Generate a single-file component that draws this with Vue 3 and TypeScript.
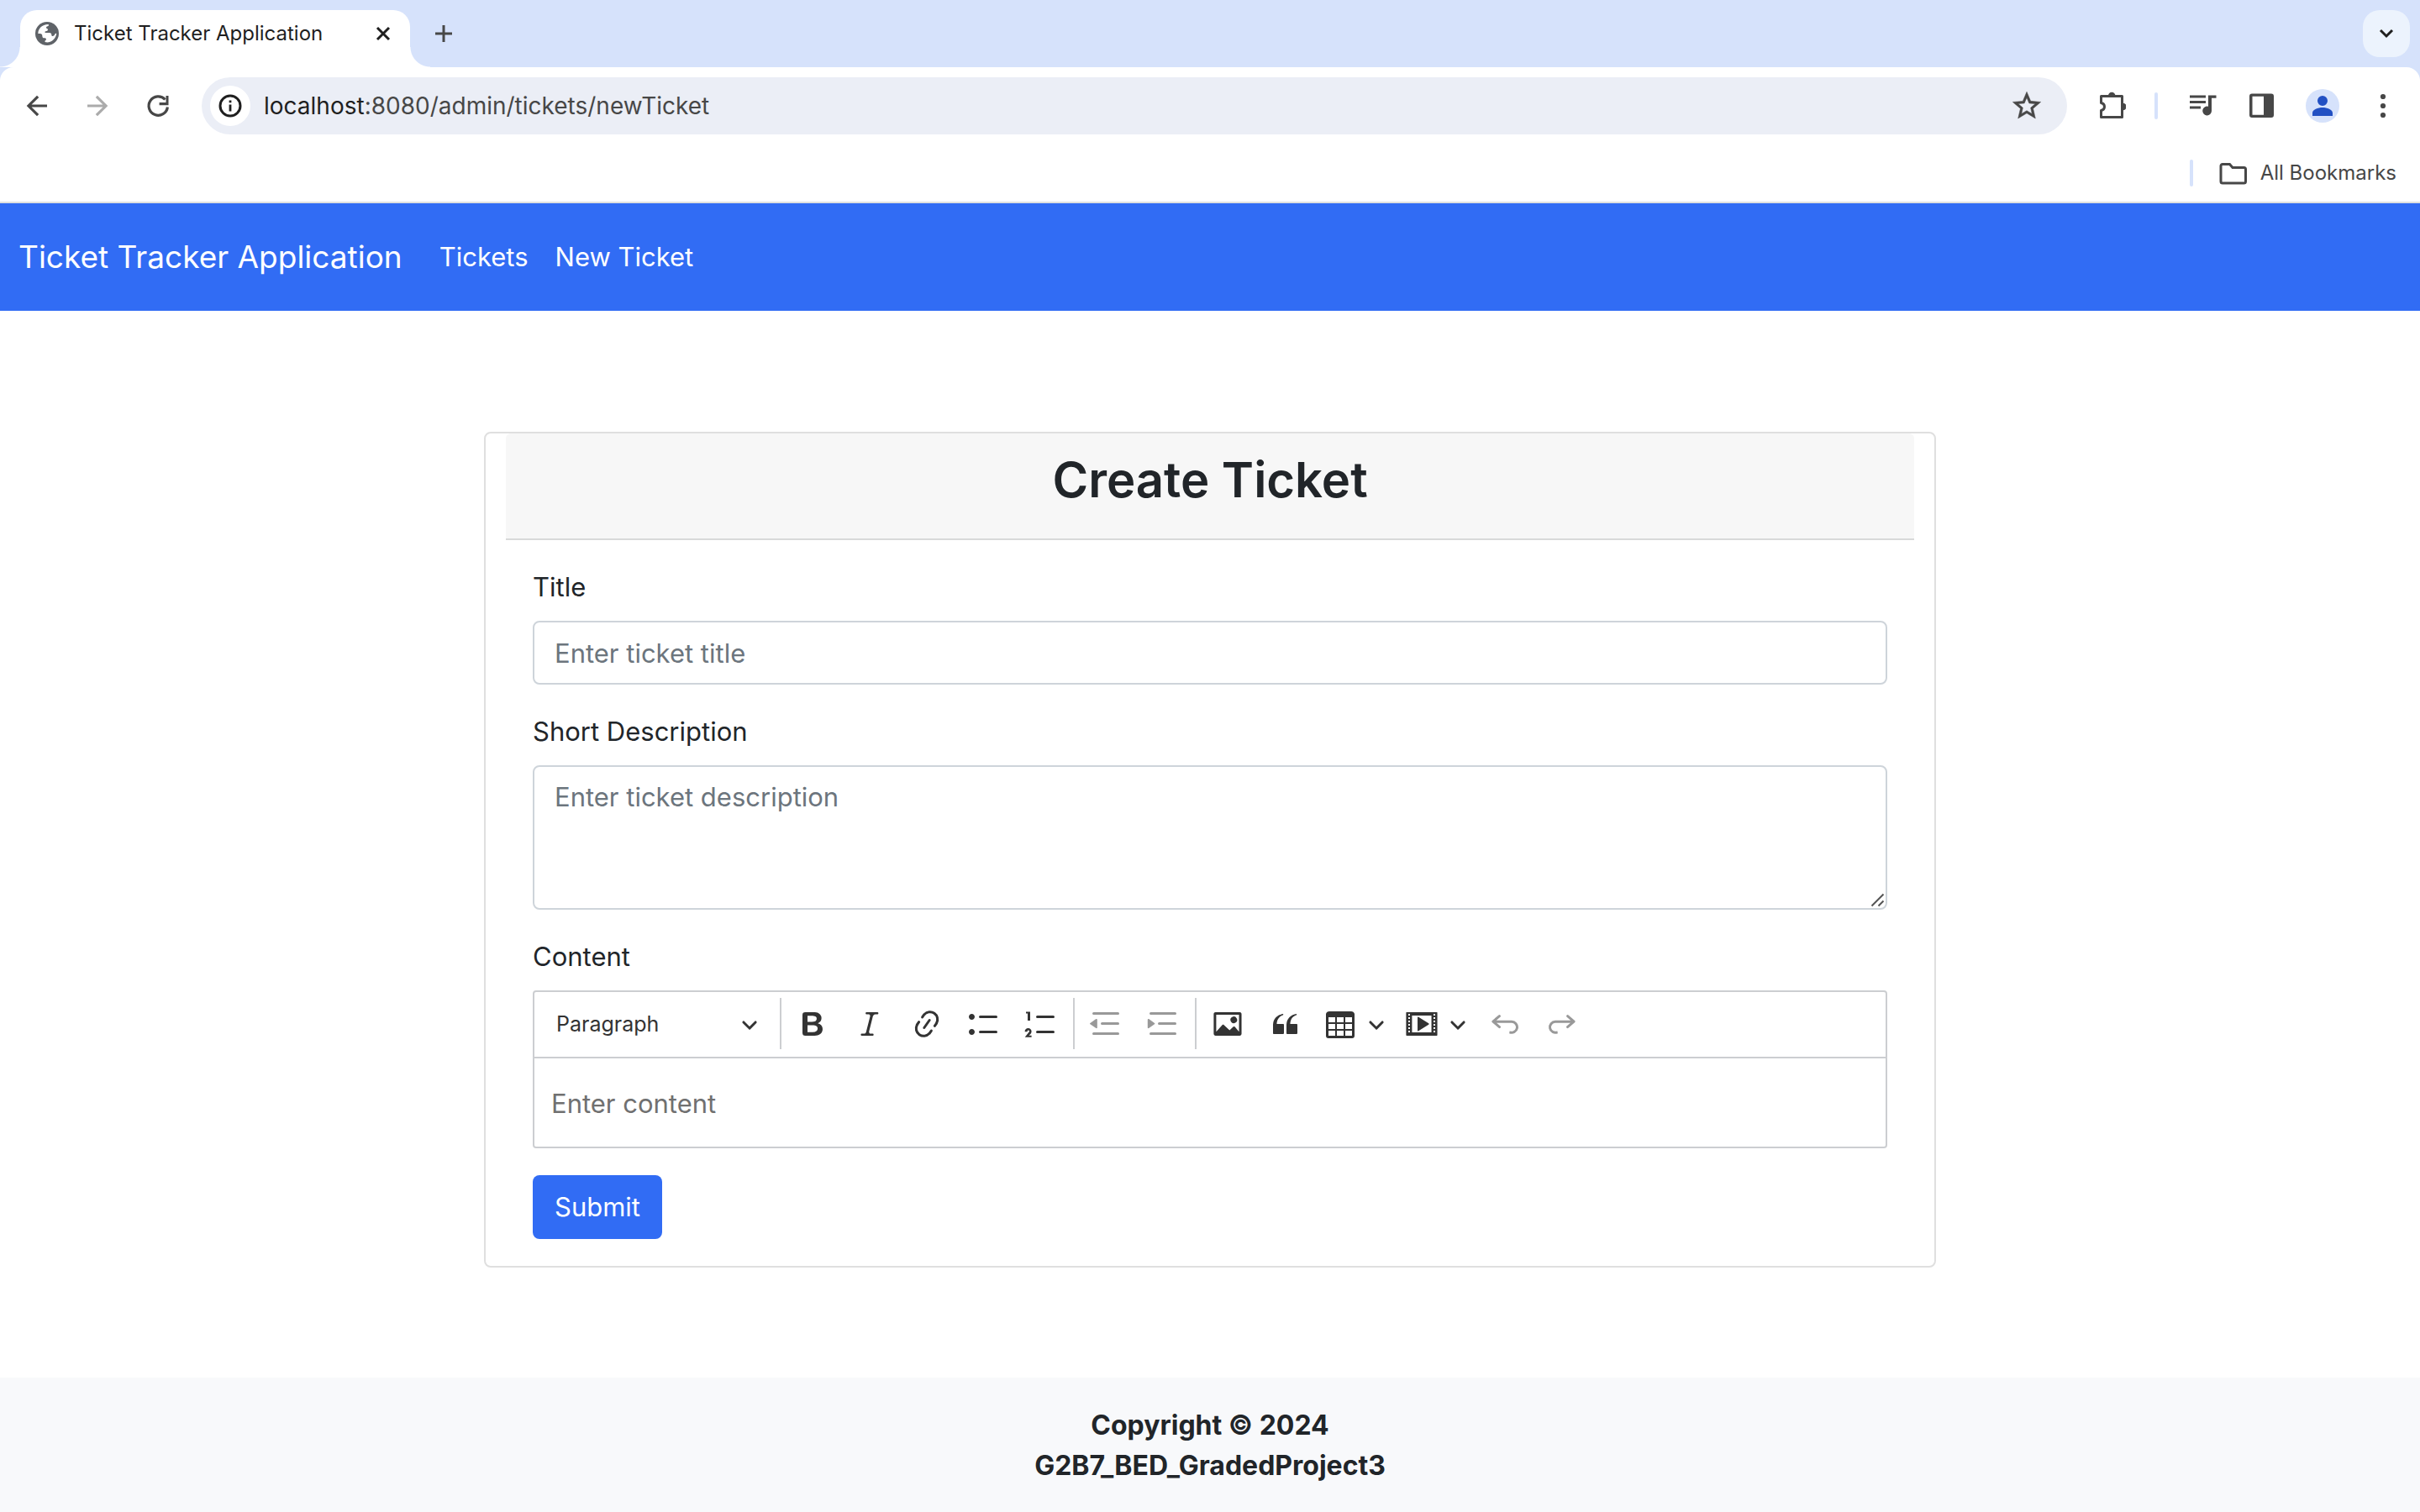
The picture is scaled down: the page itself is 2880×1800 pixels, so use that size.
<script setup lang="ts">
import { ref } from 'vue'

interface Tool {
  label: string
  path: string
  disabled?: boolean
  menu?: boolean
}

const url = ref('')
const title = ref('')
const description = ref('')
const content = ref('')

const chevron =
  'M.941 4.523a.75.75 0 1 1 1.06-1.06l3.006 3.005 3.005-3.005a.75.75 0 1 1 1.06 1.06l-3.549 3.55a.75.75 0 0 1-1.168-.136L.941 4.523z'

const toolGroups: Tool[][] = [
  [
    {
      label: 'Bold',
      path: 'M10.187 17H5.773c-.637 0-1.092-.138-1.364-.415-.273-.277-.409-.718-.409-1.323V4.738c0-.617.14-1.062.419-1.332.279-.27.73-.406 1.354-.406h4.68c.69 0 1.288.041 1.793.124.506.083.96.242 1.36.478.341.197.644.447.906.75a3.262 3.262 0 0 1 .808 2.162c0 1.401-.722 2.426-2.167 3.075C15.05 10.175 16 11.315 16 13.01a3.756 3.756 0 0 1-2.296 3.504 6.1 6.1 0 0 1-1.517.377c-.571.073-1.238.11-2 .11zm-.217-6.217H7v4.087h3.069c1.977 0 2.965-.69 2.965-2.072 0-.707-.256-1.22-.768-1.537-.512-.319-1.277-.478-2.296-.478zM7 5.13v3.619h2.606c.729 0 1.292-.067 1.69-.2a1.6 1.6 0 0 0 .91-.765c.165-.267.247-.566.247-.897 0-.707-.26-1.176-.778-1.409-.519-.232-1.31-.348-2.375-.348H7z',
    },
    {
      label: 'Italic',
      path: 'm9.586 14.633.021.004c-.036.335.095.655.393.962.082.083.173.15.274.201h1.474a.6.6 0 1 1 0 1.2H5.304a.6.6 0 0 1 0-1.2h1.15c.474-.07.809-.182 1.005-.334.157-.122.291-.32.404-.597l2.416-9.55a1.053 1.053 0 0 0-.281-.823 1.12 1.12 0 0 0-.442-.296H8.15a.6.6 0 0 1 0-1.2h6.443a.6.6 0 1 1 0 1.2h-1.195c-.376.056-.65.155-.823.296-.215.175-.423.439-.623.79l-2.366 9.347z',
    },
    {
      label: 'Link',
      path: 'm11.077 15 .991-1.416a.75.75 0 1 1 1.229.86l-1.148 1.64a.748.748 0 0 1-.217.206 5.251 5.251 0 0 1-8.503-5.955.741.741 0 0 1 .12-.274l1.147-1.639a.75.75 0 1 1 1.228.86L4.933 10.7l.006.003a3.75 3.75 0 0 0 6.132 4.294l.006.004zm5.494-5.335a.748.748 0 0 1-.12.274l-1.147 1.639a.75.75 0 1 1-1.228-.86l.86-1.23a3.75 3.75 0 0 0-6.144-4.301l-.86 1.229a.75.75 0 0 1-1.229-.86l1.148-1.64a.748.748 0 0 1 .217-.206 5.251 5.251 0 0 1 8.503 5.955zm-4.563-2.532a.75.75 0 0 1 .184 1.045l-3.155 4.505a.75.75 0 1 1-1.229-.86l3.155-4.506a.75.75 0 0 1 1.045-.184z',
    },
    {
      label: 'Bulleted List',
      path: 'M7 5.75c0 .414.336.75.75.75h9.5a.75.75 0 1 0 0-1.5h-9.5a.75.75 0 0 0-.75.75zm-6 0C1 4.784 1.777 4 2.75 4c.966 0 1.75.777 1.75 1.75 0 .966-.777 1.75-1.75 1.75C1.784 7.5 1 6.723 1 5.75zm6 9c0 .414.336.75.75.75h9.5a.75.75 0 1 0 0-1.5h-9.5a.75.75 0 0 0-.75.75zm-6 0c0-.966.777-1.75 1.75-1.75.966 0 1.75.777 1.75 1.75 0 .966-.777 1.75-1.75 1.75-.966 0-1.75-.777-1.75-1.75z',
    },
    {
      label: 'Numbered List',
      path: 'M7 5.75c0 .414.336.75.75.75h9.5a.75.75 0 1 0 0-1.5h-9.5a.75.75 0 0 0-.75.75zM3.5 3v5H2V3.7H1v-1h2.5V3zM.343 17.857l2.59-3.257H2.92a.6.6 0 1 0-1.04 0H.302a2 2 0 1 1 3.995 0h-.001c-.048.405-.16.734-.333.988-.175.254-.59.692-1.244 1.312H4.3v1h-4l.043-.043zM7 14.75a.75.75 0 0 1 .75-.75h9.5a.75.75 0 1 1 0 1.5h-9.5a.75.75 0 0 1-.75-.75z',
    },
  ],
  [
    {
      label: 'Decrease indent',
      disabled: true,
      path: 'M2 3.75c0 .414.336.75.75.75h14.5a.75.75 0 1 0 0-1.5H2.75a.75.75 0 0 0-.75.75zm5 6c0 .414.336.75.75.75h9.5a.75.75 0 1 0 0-1.5h-9.5a.75.75 0 0 0-.75.75zM2.75 16.5h14.5a.75.75 0 1 0 0-1.5H2.75a.75.75 0 1 0 0 1.5zM.7 9.45 4.2 7.05c.3-.2.7 0 .7.35v4.8c0 .35-.4.55-.7.35L.7 10.15a.42.42 0 0 1 0-.7z',
    },
    {
      label: 'Increase indent',
      disabled: true,
      path: 'M2 3.75c0 .414.336.75.75.75h14.5a.75.75 0 1 0 0-1.5H2.75a.75.75 0 0 0-.75.75zm5 6c0 .414.336.75.75.75h9.5a.75.75 0 1 0 0-1.5h-9.5a.75.75 0 0 0-.75.75zM2.75 16.5h14.5a.75.75 0 1 0 0-1.5H2.75a.75.75 0 1 0 0 1.5zM5 9.45 1.6 7.05c-.3-.2-.7 0-.7.35v4.8c0 .35.4.55.7.35L5 10.15a.42.42 0 0 0 0-.7z',
    },
  ],
  [
    {
      label: 'Insert image',
      path: 'M6.91 10.54c.26-.23.64-.21.88.03l3.36 3.14 2.23-2.06a.64.64 0 0 1 .87 0l2.52 2.97V4.5H3.2v10.12l3.71-4.08zm10.27-7.51c.6 0 1.09.47 1.09 1.05v11.84c0 .59-.49 1.06-1.09 1.06H2.79c-.6 0-1.09-.47-1.09-1.06V4.08c0-.58.49-1.05 1.1-1.05h14.38zm-5.22 5.56a1.96 1.96 0 1 1 3.4-1.96 1.96 1.96 0 0 1-3.4 1.96z',
    },
    {
      label: 'Block quote',
      path: 'M3 10.423a6.5 6.5 0 0 1 6.056-6.408l.038.67C6.448 5.423 5.354 7.663 5.22 10H9c.552 0 .5.432.5.986v4.511c0 .554-.448.503-1 .503h-5c-.552 0-.5-.449-.5-1.003v-4.574zm8 0a6.5 6.5 0 0 1 6.056-6.408l.038.67c-2.646.739-3.74 2.979-3.873 5.315H17c.552 0 .5.432.5.986v4.511c0 .554-.448.503-1 .503h-5c-.552 0-.5-.449-.5-1.003v-4.574z',
    },
    {
      label: 'Insert table',
      menu: true,
      path: 'M3 6v3h4V6H3zm0 4v3h4v-3H3zm0 4v3h4v-3H3zm5 3h4v-3H8v3zm5 0h4v-3h-4v3zm4-4v-3h-4v3h4zm0-4V6h-4v3h4zm1.5 8a1.5 1.5 0 0 1-1.5 1.5H3A1.5 1.5 0 0 1 1.5 17V4c.222-.863 1.068-1.5 2-1.5h13c.932 0 1.778.637 2 1.5v13zM12 13v-3H8v3h4zm0-4V6H8v3h4z',
    },
    {
      label: 'Insert media',
      menu: true,
      path: 'M18.68 3.03c.6 0 .59-.03.59.55v12.84c0 .59.01.56-.59.56H1.29c-.6 0-.59.03-.59-.56V3.58c0-.58-.01-.55.6-.55h17.38zM15.77 15V5H4.2v10h11.57zM2 4v1h1V4H2zm0 2v1h1V6H2zm0 2v1h1V8H2zm0 2v1h1v-1H2zm0 2v1h1v-1H2zm0 2v1h1v-1H2zM17 4v1h1V4h-1zm0 2v1h1V6h-1zm0 2v1h1V8h-1zm0 2v1h1v-1h-1zm0 2v1h1v-1h-1zm0 2v1h1v-1h-1zM7.5 6.177a.4.4 0 0 1 .593-.351l6 3.824a.4.4 0 0 1 0 .7l-6 3.824a.4.4 0 0 1-.593-.35V6.177z',
    },
    {
      label: 'Undo',
      disabled: true,
      path: 'm5.042 9.367 2.189 1.837a.75.75 0 0 1-.965 1.149l-3.788-3.18a.747.747 0 0 1-.21-.284.75.75 0 0 1 .17-.945L6.23 4.762a.75.75 0 1 1 .964 1.15L4.863 7.866h8.917A.75.75 0 0 1 14 7.9a4 4 0 1 1-1.477 7.718l.344-1.489a2.5 2.5 0 1 0 1.094-4.73l.008-.032H5.042z',
    },
    {
      label: 'Redo',
      disabled: true,
      path: 'm14.958 9.367-2.189 1.837a.75.75 0 0 0 .965 1.149l3.788-3.18a.747.747 0 0 0 .21-.284.75.75 0 0 0-.17-.945L13.77 4.762a.75.75 0 1 0-.964 1.15l2.331 1.955H6.22A.75.75 0 0 0 6 7.9a4 4 0 1 0 1.477 7.718l-.344-1.489A2.5 2.5 0 1 1 6.039 9.4l-.008-.032h8.927z',
    },
  ],
]
</script>

<template>
  <div class="window">
    <header class="browser">
      <div class="tab-strip">
        <div class="tab">
          <svg class="globe" viewBox="0 0 84 84" aria-hidden="true">
            <circle cx="42" cy="42" r="42" fill="#5f6368" />
            <path
              fill="#fff"
              d="M10 42C10 24 24 10 46 9c3 0 2 4 0 6-2 2-7 1-7 5 0 5 6 3 6 8 0 4-4 6-8 6-3 0-4 4-1 5h14c6 0 8 3 8 8 0 4 5 5 9 2 4-3 2-8 7-8 3 0 1 5 0 8-5 15-18 26-36 24-5-1-5-5-1-7 4-3 1-8-4-8-6 0-8-3-8-8 0-5-3-8-8-8z"
            />
          </svg>
          <span class="tab-title">Ticket Tracker Application</span>
          <button class="bare" type="button" aria-label="Close tab">
            <svg width="20" height="20" viewBox="0 0 20 20"><path d="m3 3 14 14M17 3 3 17" fill="none" stroke="#1f1f1f" stroke-width="3" /></svg>
          </button>
        </div>
        <button class="bare" type="button" aria-label="New tab">
          <svg width="24" height="24" viewBox="0 0 24 24"><path d="M12 2v20M2 12h20" fill="none" stroke="#474747" stroke-width="3" /></svg>
        </button>
        <button class="tab-search" type="button" aria-label="Search tabs">
          <svg width="20" height="20" viewBox="0 0 20 20"><path d="m3 6 7 7 7-7" fill="none" stroke="#1f1f1f" stroke-width="3" /></svg>
        </button>
      </div>

      <div class="toolbar">
        <div class="nav-buttons">
          <button class="tool" type="button" aria-label="Back">
            <svg viewBox="0 0 24 24"><path d="M20 11H7.700l5.800-5.700L12 3.800 3.800 12l8.200 8.200 1.500-1.500L7.700 13H20z" /></svg>
          </button>
          <button class="tool faded" type="button" aria-label="Forward" disabled>
            <svg viewBox="0 0 24 24"><path d="m12 3.800-1.500 1.500 5.800 5.700H4v2h12.300l-5.800 5.700 1.500 1.500 8.200-8.200z" /></svg>
          </button>
          <button class="tool" type="button" aria-label="Reload">
            <svg viewBox="0 0 36 36">
              <path d="M29.400 19.500A11.200 11.200 0 1 1 26.500 10.500" fill="none" stroke="#474747" stroke-width="3.200" />
              <path d="M27.500 6h3v11.200H19.600V14h7.900z" />
            </svg>
          </button>
        </div>

        <div class="address">
          <button class="site-info" type="button" aria-label="View site information">
            <svg width="28" height="28" viewBox="0 0 28 28">
              <circle cx="14" cy="14" r="12" fill="none" stroke="#1f1f1f" stroke-width="3" />
              <path d="M12.600 12.500h2.800v8h-2.800zM12.600 7.500h2.800v2.800h-2.800z" fill="#1f1f1f" />
            </svg>
          </button>
          <div class="url-field">
            <input v-model="url" class="url-input" type="text" aria-label="Address" />
            <span class="url-text"><span class="host">localhost</span>:8080/admin/tickets/newTicket</span>
          </div>
          <button class="bare star" type="button" aria-label="Bookmark this tab">
            <svg width="40" height="40" viewBox="0 0 24 24"><path fill="#474747" stroke="#474747" stroke-width=".3" d="m22 9.240-7.190-.62L12 2 9.190 8.630 2 9.240l5.460 4.730L5.820 21 12 17.270 18.180 21l-1.630-7.030L22 9.240zM12 15.400l-3.760 2.270 1-4.280-3.320-2.880 4.380-.38L12 6.100l1.710 4.040 4.380.38-3.320 2.880 1 4.280L12 15.400z" /></svg>
          </button>
        </div>

        <div class="actions">
          <button class="tool" type="button" aria-label="Extensions">
            <svg viewBox="-2 0 36 36">
              <path d="M4.500 6.500h25v25h-25v-8c2.600-.6 4-2.300 4-4.500s-1.400-3.900-4-4.500z" fill="none" stroke="#474747" stroke-width="3" stroke-linejoin="round" />
              <path d="M13 6a4.200 4.200 0 0 1 8.400 0zM30.500 14.800a4.200 4.200 0 0 1 0 8.400z" />
            </svg>
          </button>
          <span class="divider"></span>
          <button class="tool" type="button" aria-label="Media controls">
            <svg viewBox="-2 0 36 36">
              <path d="M2 5.500h19v3H2zM2 12h19v3H2zM2 18.500h13v3H2zM24 5.500h9.500v3.300H28V24a5.400 5.400 0 1 1-4-5.200z" />
            </svg>
          </button>
          <button class="tool" type="button" aria-label="Side panel">
            <svg viewBox="0 0 36 36">
              <path fill-rule="evenodd" d="M6 3.500h23a3 3 0 0 1 3 3V29a3 3 0 0 1-3 3H6a3 3 0 0 1-3-3V6.500a3 3 0 0 1 3-3zm.500 3.200v22.100H20V6.700z" />
            </svg>
          </button>
          <button class="tool" type="button" aria-label="Profile">
            <span class="avatar">
              <svg width="24" height="24" viewBox="0 0 24 24"><path fill="#2250c3" d="M12 0a6 6 0 1 1 0 12 6 6 0 0 1 0-12zM0 24v-3.500c0-4 6.500-6.500 12-6.500s12 2.500 12 6.500V24z" /></svg>
            </span>
          </button>
          <button class="tool" type="button" aria-label="Menu">
            <svg viewBox="0 0 36 36"><circle cx="18" cy="7" r="3.100" /><circle cx="18" cy="18" r="3.100" /><circle cx="18" cy="29" r="3.100" /></svg>
          </button>
        </div>
      </div>

      <div class="bookmarks">
        <span class="divider"></span>
        <button class="all-bookmarks" type="button">
          <svg width="36" height="28" viewBox="0 0 36 28"><path d="M5 3.500h8.500l3.500 4h13.500a2 2 0 0 1 2 2V24a2 2 0 0 1-2 2H5a2 2 0 0 1-2-2V5.500a2 2 0 0 1 2-2z" fill="none" stroke="#474747" stroke-width="3" /></svg>
          <span>All Bookmarks</span>
        </button>
      </div>
    </header>

    <nav class="navbar">
      <a class="brand" href="#">Ticket Tracker Application</a>
      <a class="nav-link" href="#">Tickets</a>
      <a class="nav-link" href="#">New Ticket</a>
    </nav>

    <main class="page">
      <section class="card">
        <div class="card-header"><h1>Create Ticket</h1></div>
        <form class="form" @submit.prevent>
          <div class="field">
            <label for="title">Title</label>
            <input id="title" v-model="title" class="control" type="text" placeholder="Enter ticket title" />
          </div>
          <div class="field">
            <label for="description">Short Description</label>
            <div class="area">
              <textarea id="description" v-model="description" class="control" rows="3" placeholder="Enter ticket description"></textarea>
              <svg class="grip" width="18" height="18" viewBox="0 0 18 18" aria-hidden="true">
                <path d="M1.500 15.500 15.500 1.500M9.500 15.500l6-6" fill="none" stroke="#555" stroke-width="2" />
              </svg>
            </div>
          </div>
          <div class="field">
            <label for="content">Content</label>
            <div class="editor">
              <div class="editor-toolbar" role="toolbar" aria-label="Editor toolbar">
                <div class="heading">
                  <select aria-label="Heading">
                    <option>Paragraph</option>
                    <option>Heading 1</option>
                    <option>Heading 2</option>
                  </select>
                  <svg class="heading-arrow" viewBox="0 0 10 10" aria-hidden="true"><path :d="chevron" /></svg>
                </div>
                <template v-for="(group, g) in toolGroups" :key="g">
                  <span class="separator"></span>
                  <button
                    v-for="tool in group"
                    :key="tool.label"
                    class="editor-button"
                    type="button"
                    :aria-label="tool.label"
                    :disabled="tool.disabled"
                  >
                    <svg class="glyph" viewBox="0 0 20 20"><path :d="tool.path" /></svg>
                    <svg v-if="tool.menu" class="arrow" viewBox="0 0 10 10"><path :d="chevron" /></svg>
                  </button>
                </template>
              </div>
              <textarea id="content" v-model="content" class="editor-content" rows="1" placeholder="Enter content"></textarea>
            </div>
          </div>
          <button class="submit" type="submit">Submit</button>
        </form>
      </section>
    </main>

    <footer class="footer">
      <div>Copyright © 2024</div>
      <div>G2B7_BED_GradedProject3</div>
    </footer>
  </div>
</template>

<style>
body {
  margin: 0;
  background: #fff;
}
</style>

<style scoped>
* {
  box-sizing: border-box;
}

.window {
  display: flex;
  flex-direction: column;
  min-height: 100vh;
  font-family: Inter, "Liberation Sans", sans-serif;
  font-size: 31px;
  line-height: 48px;
  color: #212529;
}

button,
input,
select,
textarea {
  font: inherit;
  color: inherit;
}

button {
  display: flex;
  align-items: center;
  justify-content: center;
  padding: 0;
  border: 0;
  background: none;
}

svg {
  display: block;
  flex: none;
}

a {
  color: inherit;
  text-decoration: none;
}

.browser {
  background: #d6e2fb;
  border-bottom: 2px solid #dfe1e0;
  font-size: 24px;
}

.tab-strip {
  display: flex;
  align-items: center;
  height: 80px;
  padding: 0 12px 0 24px;
}

.tab {
  position: relative;
  display: flex;
  align-items: center;
  align-self: flex-end;
  width: 464px;
  height: 68px;
  margin-right: 28px;
  padding: 0 22px 12px 18px;
  border-radius: 20px 20px 0 0;
  background: #fff;
}

.tab::before,
.tab::after {
  content: "";
  position: absolute;
  bottom: 0;
  width: 24px;
  height: 24px;
}

.tab::before {
  right: 100%;
  background: radial-gradient(circle at 0 0, transparent 23px, #fff 24px);
}

.tab::after {
  left: 100%;
  background: radial-gradient(circle at 100% 0, transparent 23px, #fff 24px);
}

.globe {
  width: 28px;
  height: 28px;
  margin-right: 18px;
}

.tab-title {
  flex: 1;
  color: #1f1f1f;
}

.tab-search {
  width: 56px;
  height: 56px;
  margin-left: auto;
  border-radius: 20px;
  background: #ecf3fd;
}

.toolbar {
  display: flex;
  align-items: center;
  gap: 24px;
  height: 92px;
  padding: 0 16px;
  border-radius: 16px 16px 0 0;
  background: #fff;
}

.nav-buttons {
  display: flex;
  gap: 16px;
}

.tool {
  width: 56px;
  height: 56px;
}

.tool svg {
  width: 36px;
  height: 36px;
  fill: #474747;
}

.tool .avatar svg {
  width: 24px;
  height: 24px;
}

.faded svg {
  fill: #ababab;
}

.address {
  display: flex;
  flex: 1;
  align-items: center;
  height: 68px;
  padding: 0 28px 0 10px;
  border-radius: 34px;
  background: #ebeef6;
}

.site-info {
  width: 48px;
  height: 48px;
  border-radius: 50%;
  background: #fff;
}

.url-field {
  position: relative;
  flex: 1;
  margin-left: 16px;
  font-size: 28px;
}

.url-input {
  display: block;
  width: 100%;
  height: 48px;
  padding: 0;
  border: 0;
  background: none;
  outline: 0;
}

.url-text {
  position: absolute;
  inset: 0;
  color: #474747;
  pointer-events: none;
}

.host {
  color: #1f1f1f;
}

.actions {
  display: flex;
  align-items: center;
  gap: 16px;
}

.divider {
  width: 4px;
  height: 32px;
  border-radius: 2px;
  background: #d6e2fb;
}

.actions .divider {
  margin: 0 8px;
}

.avatar {
  display: flex;
  align-items: center;
  justify-content: center;
  width: 40px;
  height: 40px;
  border-radius: 50%;
  background: #d6e2fb;
}

.bookmarks {
  display: flex;
  align-items: center;
  justify-content: flex-end;
  gap: 30px;
  height: 68px;
  padding: 0 28px;
  background: #fff;
}

.all-bookmarks {
  gap: 14px;
  color: #474747;
}

.navbar {
  display: flex;
  align-items: center;
  height: 128px;
  padding: 0 22px;
  background: #316cf4;
  color: #fff;
}

.brand {
  margin-right: 28px;
  font-size: 37px;
}

.nav-link {
  padding: 16px;
}

.page {
  display: flex;
  justify-content: center;
  padding: 144px 0 96px;
}

.card {
  width: 60%;
  padding: 0 24px;
  border: 2px solid #dfdfdf;
  border-radius: 8px;
}

.card-header {
  padding: 16px 32px;
  border-bottom: 2px solid #d8d9d9;
  border-radius: 6px 6px 0 0;
  background: #f7f7f7;
  text-align: center;
}

h1 {
  margin: 0 0 14px;
  font-size: 58px;
  font-weight: 600;
  line-height: 79px;
}

.form {
  display: flex;
  flex-direction: column;
  align-items: flex-start;
  gap: 32px;
  padding: 32px;
}

.field {
  display: flex;
  flex-direction: column;
  gap: 16px;
  width: 100%;
}

.control {
  display: block;
  width: 100%;
  height: 76px;
  padding: 12px 24px;
  border: 2px solid #ced4da;
  border-radius: 8px;
  background: #fff;
}

.area {
  position: relative;
}

.area .control {
  height: 172px;
  resize: none;
}

.grip {
  position: absolute;
  right: 2px;
  bottom: 2px;
  pointer-events: none;
}

.control::placeholder {
  color: #6c757d;
  opacity: 1;
}

.editor {
  border: 2px solid #ccced1;
  border-radius: 4px;
}

.editor-toolbar {
  display: flex;
  align-items: center;
  gap: 8px;
  height: 79px;
  padding: 0 8px 2px;
  border-bottom: 2px solid #ccced1;
  color: #333;
}

.heading {
  position: relative;
  width: 276px;
  font-size: 25px;
}

.heading select {
  display: block;
  width: 100%;
  height: 60px;
  padding: 0 18px;
  border: 0;
  background: none;
  appearance: none;
}

.heading-arrow {
  position: absolute;
  top: 20px;
  right: 18px;
  width: 20px;
  height: 20px;
  fill: #333;
  pointer-events: none;
}

.separator {
  width: 2px;
  height: 61px;
  margin-right: -1px;
  background: #ccced1;
}

.editor-button {
  gap: 13px;
  min-width: 60px;
  height: 60px;
  padding: 0 8px;
}

.editor-button svg {
  fill: #333;
}

.editor-button:disabled svg {
  fill: #999;
}

.glyph {
  width: 40px;
  height: 40px;
}

.arrow {
  width: 20px;
  height: 20px;
}

.editor-content {
  display: block;
  width: 100%;
  height: 105px;
  padding: 30px 20px 27px;
  border: 0;
  background: none;
  resize: none;
}

.editor-content::placeholder {
  color: #707070;
  opacity: 1;
}

.submit {
  height: 76px;
  padding: 0 26px;
  border-radius: 8px;
  background: #316cf4;
  color: #fff;
}

.footer {
  margin-top: auto;
  padding: 33px 32px 31px;
  background: #f8f9fb;
  font-size: 32px;
  font-weight: 700;
  text-align: center;
}
</style>
